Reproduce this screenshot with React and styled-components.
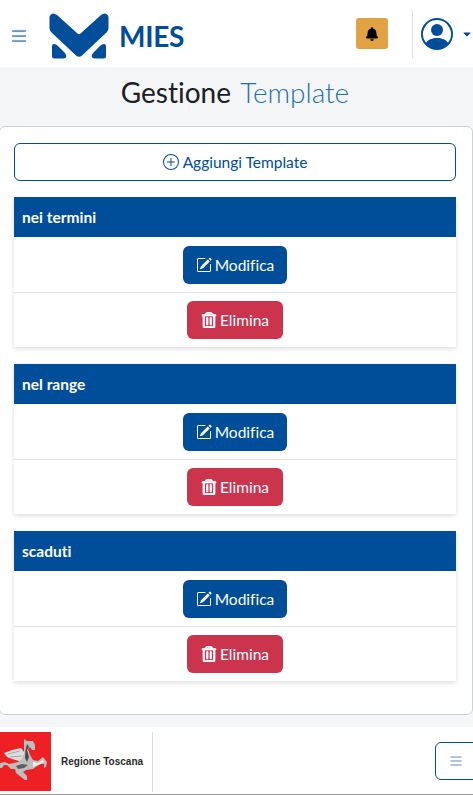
import React from "react";
import styled, { createGlobalStyle } from "styled-components";
import { BsList, BsPencilSquare, BsPersonCircle, BsPlusCircle } from "react-icons/bs";
import { FaBell, FaCaretDown, FaRegTrashAlt } from "react-icons/fa";

const GlobalStyle = createGlobalStyle`
  html, body {
    margin: 0;
    padding: 0;
    overflow-x: hidden;
    background: #fff;
  }
  * {
    box-sizing: border-box;
  }
  body {
    font-family: "Lato", "Noto Sans", sans-serif;
    font-variant-ligatures: none;
  }
`;

const Page = styled.div`
  width: 473px;
  height: 795px;
  display: flex;
  flex-direction: column;
  overflow: hidden;
  background: #f5f6f8;
`;

const Header = styled.header`
  height: 67px;
  flex-shrink: 0;
  background: #fff;
  display: flex;
  align-items: center;
  padding-left: 9px;
`;

const MenuToggle = styled.span`
  display: flex;
  color: #4f86b8;
  font-size: 20px;
  margin-top: 5px;

  svg {
    stroke: currentColor;
    stroke-width: 0.4;
  }
`;

const Brand = styled.div`
  display: flex;
  align-items: center;
  margin-left: 20px;
  margin-top: 6px;
  gap: 10px;
  color: #004d99;
  font-size: 28px;
  font-weight: 700;
  letter-spacing: -0.3px;
`;

const BrandName = styled.span`
  margin-top: -2px;
`;

const HeaderActions = styled.div`
  margin-left: auto;
  display: flex;
  align-items: center;
  height: 48px;
`;

const BellButton = styled.span`
  width: 32px;
  height: 31px;
  border-radius: 3px;
  background: #e1a243;
  color: #000;
  display: flex;
  align-items: center;
  justify-content: center;
  font-size: 14px;
  margin-right: 24px;
`;

const UserBox = styled.div`
  height: 48px;
  border-left: 1px solid #dcdfe3;
  display: flex;
  align-items: center;
  padding-left: 8px;
  color: #004d99;
  font-size: 32px;
  width: 61px;
`;

const Caret = styled.span`
  display: flex;
  font-size: 12px;
  margin-left: 8px;
`;

const Title = styled.h1`
  margin: 0;
  height: 59px;
  flex-shrink: 0;
  padding-top: 5px;
  padding-right: 3px;
  text-align: center;
  font-size: 28px;
  line-height: 40px;
  font-weight: 400;
  color: #1c2024;
`;

const TitleLight = styled.span`
  font-weight: 300;
  color: #1f6fb3;
  margin-left: 2px;
`;

const Card = styled.main`
  height: 589px;
  flex-shrink: 0;
  width: 474px;
  margin-left: -1px;
  background: #fff;
  border: 1px solid #ced1d5;
  border-radius: 6px;
  padding: 16px 16px 0 14px;
  display: flex;
  flex-direction: column;
`;

const AddButton = styled.button`
  height: 38px;
  width: 100%;
  background: #fff;
  border: 1px solid #004d99;
  border-radius: 6px;
  color: #004d99;
  font: inherit;
  font-size: 15.5px;
  display: flex;
  align-items: center;
  justify-content: center;
  gap: 4px;
  margin-bottom: 16px;

  svg {
    font-size: 16px;
  }
`;

const Section = styled.section`
  margin-bottom: 17px;
  box-shadow: 0 2px 5px rgba(0, 0, 0, 0.13);
`;

const SectionHead = styled.div`
  height: 40px;
  background: #004d99;
  color: #fff;
  font-size: 15.5px;
  font-weight: 700;
  display: flex;
  align-items: center;
  padding-left: 8px;
`;

const ActionRow = styled.div`
  height: 55px;
  display: flex;
  align-items: center;
  justify-content: center;
  background: #fff;
  & + & {
    border-top: 1px solid #dfe1e4;
  }
`;

const ActionButton = styled.button`
  height: 38px;
  width: ${(p) => p.$width}px;
  border: 0;
  border-radius: 6px;
  background: ${(p) => p.$bg};
  color: #fff;
  font: inherit;
  font-size: 15.5px;
  display: flex;
  align-items: center;
  justify-content: center;
  gap: 3px;

  svg {
    font-size: 16px;
    flex-shrink: 0;
  }
`;

const TrashIcon = styled(FaRegTrashAlt)`
  stroke: currentColor;
  stroke-width: 24;
`;

const Footer = styled.footer`
  flex: 1;
  margin-top: 12px;
  background: #fff;
  border-bottom: 1px solid #9a9a9a;
  display: flex;
  align-items: center;
  justify-content: space-between;
`;

const FooterBrand = styled.div`
  display: flex;
  align-items: center;
  height: 60px;
  margin-top: 2px;
`;

const RegionFlag = styled.svg`
  width: 51px;
  height: 59px;
  display: block;
`;

const RegionName = styled.span`
  font-family: "Liberation Sans", Arial, sans-serif;
  font-size: 10px;
  font-weight: 700;
  color: #2a2a2a;
  margin-left: 10px;
  width: 91px;
  white-space: nowrap;
`;

const FooterDivider = styled.span`
  align-self: stretch;
  border-left: 1px solid #dcdcdc;
`;

const FooterToggle = styled.span`
  width: 51px;
  height: 38px;
  flex-shrink: 0;
  margin-right: -13px;
  border: 1px solid #004d99;
  border-radius: 6px;
  color: #a4b8cc;
  display: flex;
  align-items: center;
  padding-left: 12px;
  font-size: 16px;

  svg {
    stroke: currentColor;
    stroke-width: 0.6;
  }
`;

const MiesLogo = () => (
  <svg width="60" height="48" viewBox="0 0 60 48" fill="#004d99">
    <path d="M0.5 4 Q1 1 4 0.5 Q6 0.5 8 2 L28.5 20.5 Q30 22 31.5 20.5 L52 2 Q54 0.5 56 0.5 Q59 1 59.5 4 L59.5 15 Q59.5 17.5 58 19 L33 42.5 Q30 45 27 42.5 L2 19 Q0.5 17.5 0.5 15 Z" />
    <path d="M3 33 Q3 31 5 31 Q7 31 9 33 L16 40 Q19 44.5 15 45.5 L5 45.5 Q3 45.5 3 43 Z" />
    <path d="M57 33 Q57 31 55 31 Q53 31 51 33 L44 40 Q41 44.5 45 45.5 L55 45.5 Q57 45.5 57 43 Z" />
  </svg>
);

const Pegasus = () => (
  <RegionFlag viewBox="0 0 51 59">
    <rect width="51" height="59" fill="#ee2024" />
    {/* wing */}
    <path d="M4 21 L12 18 L21 16 L24 20 L25 29 L19 29 L12 27 L7 25 Z" fill="#dcdcdc" />
    <path d="M8 22 L20 19 M10 25 L22 24" stroke="#9a9a9a" strokeWidth="0.8" fill="none" />
    {/* body, legs and tail */}
    <path
      d="M24 7 L27 9 L33 9 L35 13 L35 18 L32 18 L30 15 L28 17 L30 23 L33 28 L38 29 L43 25 L47 30 L46 35 L44 36 L44 32 L41 32 L37 34 L33 37 L26 38 L23 40 L27 44 L27 48 L25 48 L21 45 L16 41 L15 37 L11 37 L7 33 L4 33 L2 36 L0 36 L0 31 L5 30 L9 32 L14 31 L18 30 L22 27 L24 22 L24 15 Z"
      fill="#bdbdbd"
    />
    <path d="M27 12 L29 15 L27 18 L29 25 L27 30 L25 26 L25.5 18 Z" fill="#4a4a4a" />
    <path d="M16 34 L22 32 L28 33 L24 36 L18 37 Z" fill="#5e5e5e" />
    <path d="M33 30 L38 31 L43 28 L44 30 L38 33 L33 35 Z" fill="#eeeeee" />
  </RegionFlag>
);

const sections = ["nei termini", "nel range", "scaduti"];

export default function App() {
  return (
    <Page>
      <GlobalStyle />
      <Header>
        <MenuToggle>
          <BsList />
        </MenuToggle>
        <Brand>
          <MiesLogo />
          <BrandName>MIES</BrandName>
        </Brand>
        <HeaderActions>
          <BellButton>
            <FaBell />
          </BellButton>
          <UserBox>
            <BsPersonCircle />
            <Caret>
              <FaCaretDown />
            </Caret>
          </UserBox>
        </HeaderActions>
      </Header>

      <Title>
        Gestione <TitleLight>Template</TitleLight>
      </Title>

      <Card>
        <AddButton>
          <BsPlusCircle />
          Aggiungi Template
        </AddButton>
        {sections.map((name) => (
          <Section key={name}>
            <SectionHead>{name}</SectionHead>
            <ActionRow>
              <ActionButton $bg="#004d99" $width={104}>
                <BsPencilSquare />
                Modifica
              </ActionButton>
            </ActionRow>
            <ActionRow>
              <ActionButton $bg="#cc334d" $width={96}>
                <TrashIcon />
                Elimina
              </ActionButton>
            </ActionRow>
          </Section>
        ))}
      </Card>

      <Footer>
        <FooterBrand>
          <Pegasus />
          <RegionName>Regione Toscana</RegionName>
          <FooterDivider />
        </FooterBrand>
        <FooterToggle>
          <BsList />
        </FooterToggle>
      </Footer>
    </Page>
  );
}
